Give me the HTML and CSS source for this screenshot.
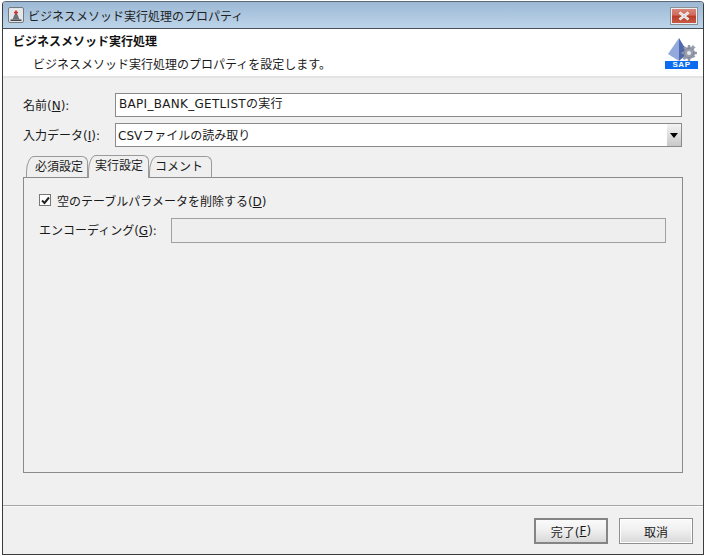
FILE: index.html
```html
<!DOCTYPE html>
<html lang="ja">
<head>
<meta charset="utf-8">
<title>ビジネスメソッド実行処理のプロパティ</title>
<link rel="stylesheet" href="styles.css">
</head>
<body>
<div class="window">
  <div class="titlebar">
    <svg class="app-icon" width="16" height="16" viewBox="0 0 16 16">
      <rect x="0.5" y="0.5" width="15" height="15" rx="1.5" fill="#e4e6ea" stroke="#77797d"/>
      <path d="M2.500 12.500h11v1.500h-11z" fill="#44474b"/>
      <path d="M4.500 12.500l2.500-6h2l2.500 6z" fill="#6c7076"/>
      <path d="M8 3.500v4M6 5.500h4" stroke="#c8322c" stroke-width="1.600"/>
    </svg>
    <span class="title-text">ビジネスメソッド実行処理のプロパティ</span>
    <div class="close-btn">
      <svg width="14" height="10" viewBox="0 0 14 10"><path d="M2.500 1.500l9 7M11.500 1.500l-9 7" stroke="#fff" stroke-width="2.600"/><path d="M3 2l8 6M11 2l-8 6" stroke="#c4cbd0" stroke-width="1"/></svg>
    </div>
  </div>
  <div class="header">
    <div class="header-text">
      <div class="header-title">ビジネスメソッド実行処理</div>
      <div class="header-desc">ビジネスメソッド実行処理のプロパティを設定します。</div>
    </div>
    <div class="sap-logo">
      <svg width="33" height="23" viewBox="0 0 33 23">
        <path d="M14 0L3 16l11 7z" fill="#93a9dc"/>
        <path d="M14 0l9 15-9 8z" fill="#4e68b0"/>
        <g fill="#9a9fb0" stroke="#6f7486" stroke-width="0.500">
          <circle cx="24" cy="15" r="5.500"/>
          <path d="M23 7.500h2v3h-2zM23 19.500h2v3h-2zM16.500 14h3v2h-3zM28.500 14h3v2h-3zM18 9.500l2-1 2 2-2 2zM28 19.500l2-1-2-2-2 2zM18 20.500l2 1 2-2-2-2zM30 9.500l-2-2-2 2 2 2z"/>
        </g>
        <circle cx="24" cy="15" r="2" fill="#e8eaf0"/>
      </svg>
      <div class="sap-band">SAP</div>
    </div>
  </div>
  <div class="content">
    <div class="form-row">
      <label class="form-label">名前(<u>N</u>):</label>
      <div class="text-field">BAPI_BANK_GETLISTの実行</div>
    </div>
    <div class="form-row combo-row">
      <label class="form-label">入力データ(<u>I</u>):</label>
      <div class="combo">
        <span class="combo-value">CSVファイルの読み取り</span>
        <span class="combo-arrow"><i class="arrow"></i></span>
      </div>
    </div>
    <div class="tabs">
      <div class="tab tab-first">必須設定</div>
      <div class="tab tab-active">実行設定</div>
      <div class="tab tab-last">コメント</div>
    </div>
    <div class="panel">
      <div class="check-row">
        <span class="checkbox">
          <svg width="9" height="9" viewBox="0 0 9 9"><path d="M1 4.500l2.500 2.500L8 1.500" fill="none" stroke="#222" stroke-width="2"/></svg>
        </span>
        <span>空のテーブルパラメータを削除する(<u>D</u>)</span>
      </div>
      <div class="enc-row">
        <span class="enc-label">エンコーディング(<u>G</u>):</span>
        <div class="enc-field"></div>
      </div>
    </div>
  </div>
  <div class="footer">
    <div class="btn btn-default">完了(<u>F</u>)</div>
    <div class="btn">取消</div>
  </div>
</div>
</body>
</html>
```
FILE: styles.css
```css
* { box-sizing: border-box; }
html, body { margin: 0; padding: 0; background: #fff; }
body {
  width: 706px;
  height: 556px;
  padding: 1px 2px;
  font-family: "DejaVu Sans", "Noto Sans CJK JP", sans-serif;
  font-size: 12px;
  color: #1a1a1a;
}
u { text-underline-offset: 1px; }
.window {
  width: 702px;
  height: 554px;
  border: 1px solid #3c3c3c;
  border-top-color: #5a6a78;
  border-radius: 4px 4px 0 0;
  background: #f0f0f0;
  display: flex;
  flex-direction: column;
  overflow: hidden;
}
.titlebar {
  height: 27px;
  flex: none;
  display: flex;
  align-items: center;
  padding: 0 5px;
  background: linear-gradient(#9cb8d4, #bdd5ea);
  border-bottom: 1px solid #4a4f55;
}
.app-icon { flex: none; }
.title-text { margin-left: 4px; font-size: 12px; color: #222; flex: 1; }
.close-btn {
  width: 28px;
  height: 18px;
  margin-top: 2px;
  border: 1px solid #8b9095;
  outline: 1px solid #e8eef2;
  outline-offset: -2px;
  background: linear-gradient(#d98b7e 0, #cf6a5c 45%, #b83c28 50%, #c8604c 100%);
  display: flex;
  align-items: center;
  justify-content: center;
}
.header {
  height: 49px;
  flex: none;
  background: #fff;
  border-bottom: 2px solid #e4e4e4;
  display: flex;
  justify-content: space-between;
  padding: 4px 5px 0 10px;
}
.header-title { font-weight: 700; font-size: 12px; line-height: 18px; color: #111; }
.header-desc { margin-top: 6px; margin-left: 20px; font-size: 12px; line-height: 16px; }
.sap-logo { width: 33px; margin-top: 5px; }
.sap-logo svg { display: block; }
.sap-band {
  height: 8px;
  background: #0b6cf0;
  color: #fff;
  font: 700 8px/8px "Liberation Sans", sans-serif;
  letter-spacing: 0.5px;
  text-align: center;
}
.content { flex: 1; padding: 15px 21px 0 20px; display: flex; flex-direction: column; min-height: 0; }
.form-row { display: flex; align-items: center; height: 24px; flex: none; }
.combo-row { margin-top: 6px; }
.form-label { width: 92px; flex: none; padding-bottom: 2px; }
.text-field {
  flex: 1;
  height: 24px;
  background: #fff;
  border: 1px solid #8a8a8a;
  padding: 0 3px;
  line-height: 20px;
  letter-spacing: 0.3px;
}
.combo {
  flex: 1;
  height: 24px;
  background: #fff;
  border: 1px solid #8a8a8a;
  display: flex;
  align-items: center;
  padding-left: 2px;
}
.combo-value { flex: 1; padding-bottom: 2px; }
.combo-arrow {
  width: 14px;
  height: 22px;
  background: linear-gradient(#f4f4f4, #c8c8c8);
  display: flex;
  align-items: center;
  justify-content: center;
}
.arrow { width: 0; height: 0; border: 4px solid transparent; border-top: 5px solid #000; border-bottom: 0; }
.tabs { display: flex; height: 23px; margin-top: 8px; margin-bottom: -1px; padding-left: 3px; flex: none; position: relative; z-index: 1; }
.tab {
  padding: 1px 5px 0 8px;
  border: 1px solid #9a9a9a;
  border-bottom: 0;
  border-radius: 8px 6px 0 0 / 16px 6px 0 0;
  background: #efefef;
  white-space: nowrap;
  line-height: 18px;
}
.tab-first { margin-top: 1px; height: 22px; border-bottom: 1px solid #8a8a8a; width: 62px; }
.tab-active { height: 23px; width: 61px; padding-left: 6px; background: #f0f0f0; }
.tab-last { margin-top: 1px; height: 22px; border-bottom: 1px solid #8a8a8a; width: 63px; padding-left: 5px; }
.panel {
  width: 660px;
  height: 296px;
  border: 1px solid #8a8a8a;
  background: #f0f0f0;
  padding: 13px 15px 0;
  flex: none;
}
.check-row { display: flex; align-items: center; height: 18px; gap: 6px; }
.checkbox {
  width: 12px;
  height: 12px;
  background: #fff;
  border: 1px solid #777;
  display: flex;
  align-items: center;
  justify-content: center;
}
.enc-row { display: flex; align-items: center; margin-top: 9px; height: 25px; }
.enc-label { width: 132px; flex: none; padding-bottom: 2px; }
.enc-field { width: 495px; height: 25px; border: 1px solid #a0a0a0; background: #eeeeee; }
.footer {
  height: 49px;
  flex: none;
  border-top: 1px solid #a6a6a6;
  box-shadow: inset 0 1px 0 #fafafa;
  display: flex;
  justify-content: flex-end;
  gap: 11px;
  padding: 12px 10px 0 0;
}
.btn {
  width: 74px;
  height: 26px;
  border: 1px solid #8f8f8f;
  outline: 1px solid #fff;
  outline-offset: -2px;
  background: linear-gradient(#fafafa, #f0f0f0 45%, #d8d8d8);
  display: flex;
  align-items: center;
  justify-content: center;
}
.btn-default { border: 2px solid #858585; outline: 0; }
```
